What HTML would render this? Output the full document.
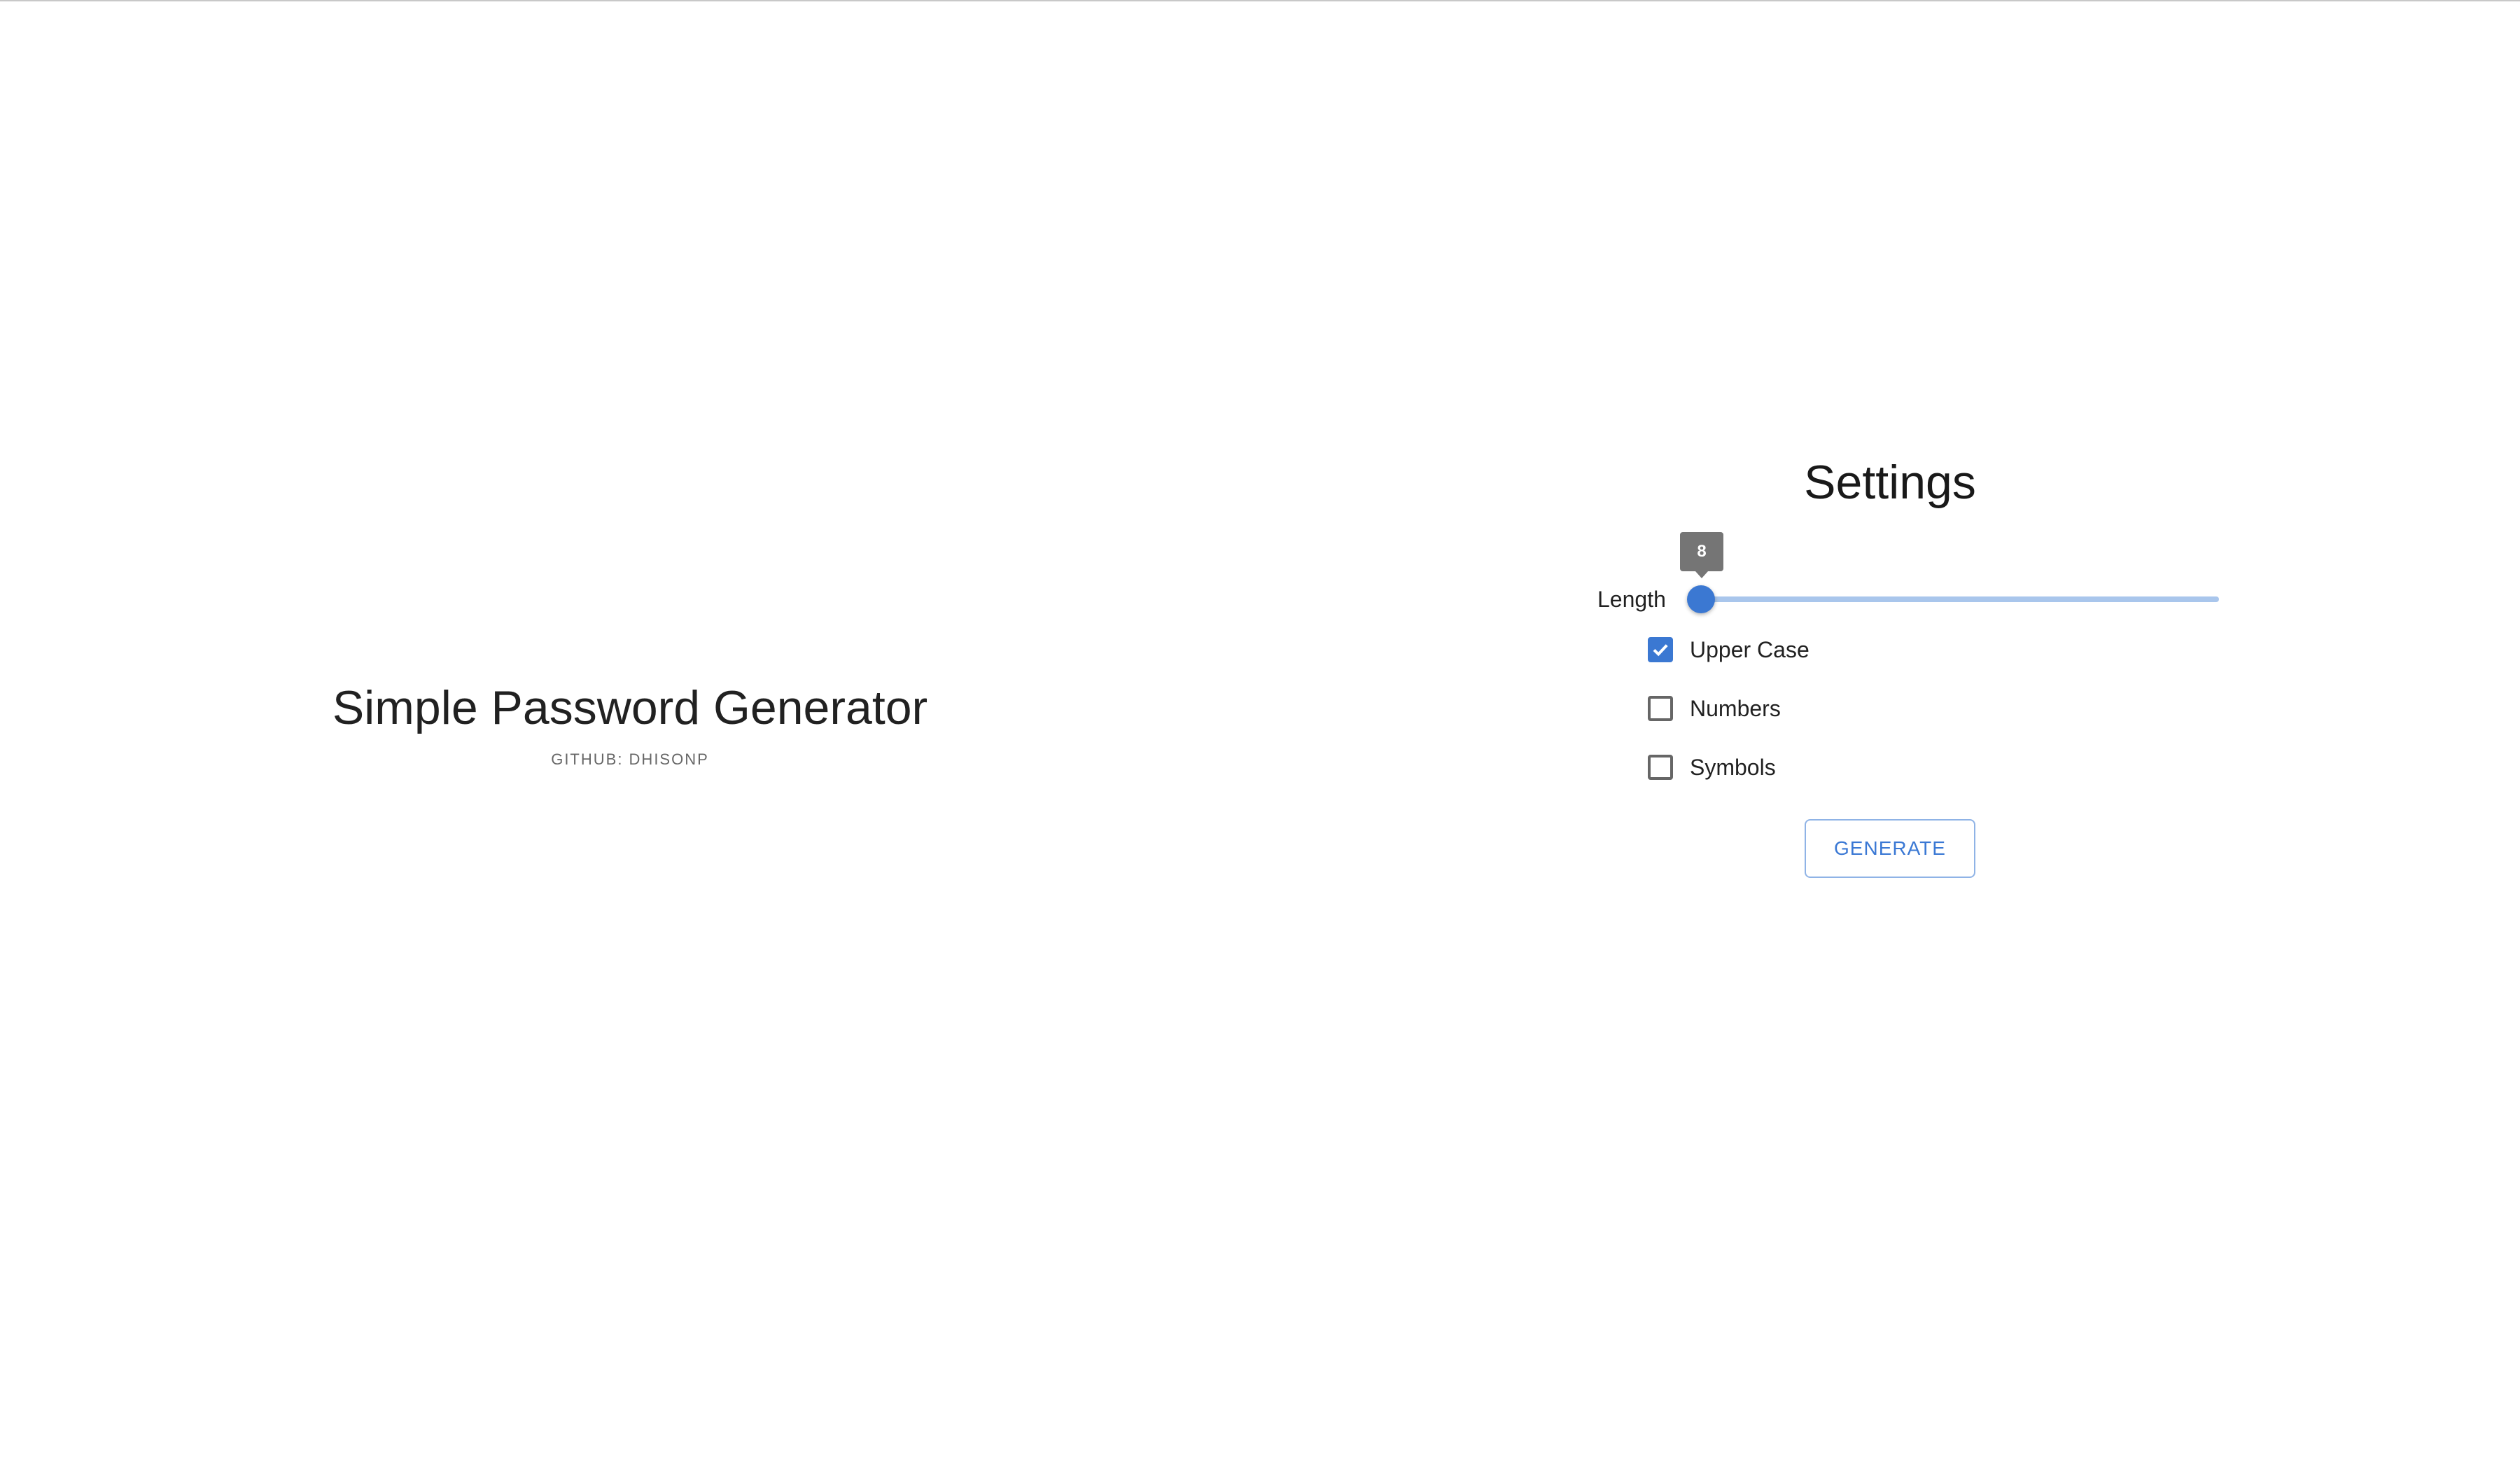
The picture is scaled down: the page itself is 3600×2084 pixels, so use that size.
<!DOCTYPE html>
<html><head><meta charset="utf-8"><style>
html{zoom:2}
body{margin:0;width:1800px;height:1042px;background:#fff;font-family:"Liberation Sans",Arial,sans-serif;position:relative;overflow:hidden;border-top:1px solid #c8c8c8;box-sizing:border-box}
.a{position:absolute}
.title{left:0;width:900px;text-align:center;top:485px;font-size:34px;color:rgba(0,0,0,.87)}
.gh{left:0;width:900px;text-align:center;top:535px;font-size:11px;letter-spacing:1px;color:rgba(0,0,0,.6)}
.set{left:900px;width:900px;text-align:center;top:324px;font-size:34px;color:rgba(0,0,0,.9)}
.len{left:1141px;top:418px;font-size:16px;color:rgba(0,0,0,.87)}
.track{left:1215px;top:425px;width:370px;height:4px;border-radius:2px;background:#a9c6ec}
.thumb{left:1205px;top:417px;width:20px;height:20px;border-radius:50%;background:#3b78d2;box-shadow:0 1px 3px rgba(0,0,0,.3)}
.tip{left:1200px;top:379px;width:31px;height:28px;background:#757575;border-radius:2px;color:#fff;font-size:12px;font-weight:bold;text-align:center;line-height:28px}
.tip:after{content:"";position:absolute;left:11px;top:28px;border:4.5px solid transparent;border-top:5px solid #757575}
.cb{left:1177px;width:14px;height:14px;border:2px solid #666;border-radius:2px}
.cb.on{background:#3b78d2;border-color:#3b78d2}
.lab{left:1207px;font-size:16px;color:rgba(0,0,0,.87)}
.btn{left:1289px;top:584px;width:120px;height:40px;border:1px solid #8fb3e6;border-radius:4px;color:#3a78d4;font-size:14px;letter-spacing:.5px;text-align:center;line-height:40px}
</style></head><body>
<div class="a title">Simple Password Generator</div>
<div class="a gh">GITHUB: DHISONP</div>
<div class="a set">Settings</div>
<div class="a len">Length</div>
<div class="a track"></div>
<div class="a tip">8</div>
<div class="a thumb"></div>
<div class="a cb on" style="top:454px"><svg width="14" height="14" viewBox="0 0 14 14" style="display:block"><path d="M2.5 7.2 L5.6 10.2 L11.6 3.8" fill="none" stroke="#fff" stroke-width="2"/></svg></div>
<div class="a lab" style="top:454px">Upper Case</div>
<div class="a cb" style="top:496px"></div>
<div class="a lab" style="top:496px">Numbers</div>
<div class="a cb" style="top:538px"></div>
<div class="a lab" style="top:538px">Symbols</div>
<div class="a btn">GENERATE</div>
</body></html>
